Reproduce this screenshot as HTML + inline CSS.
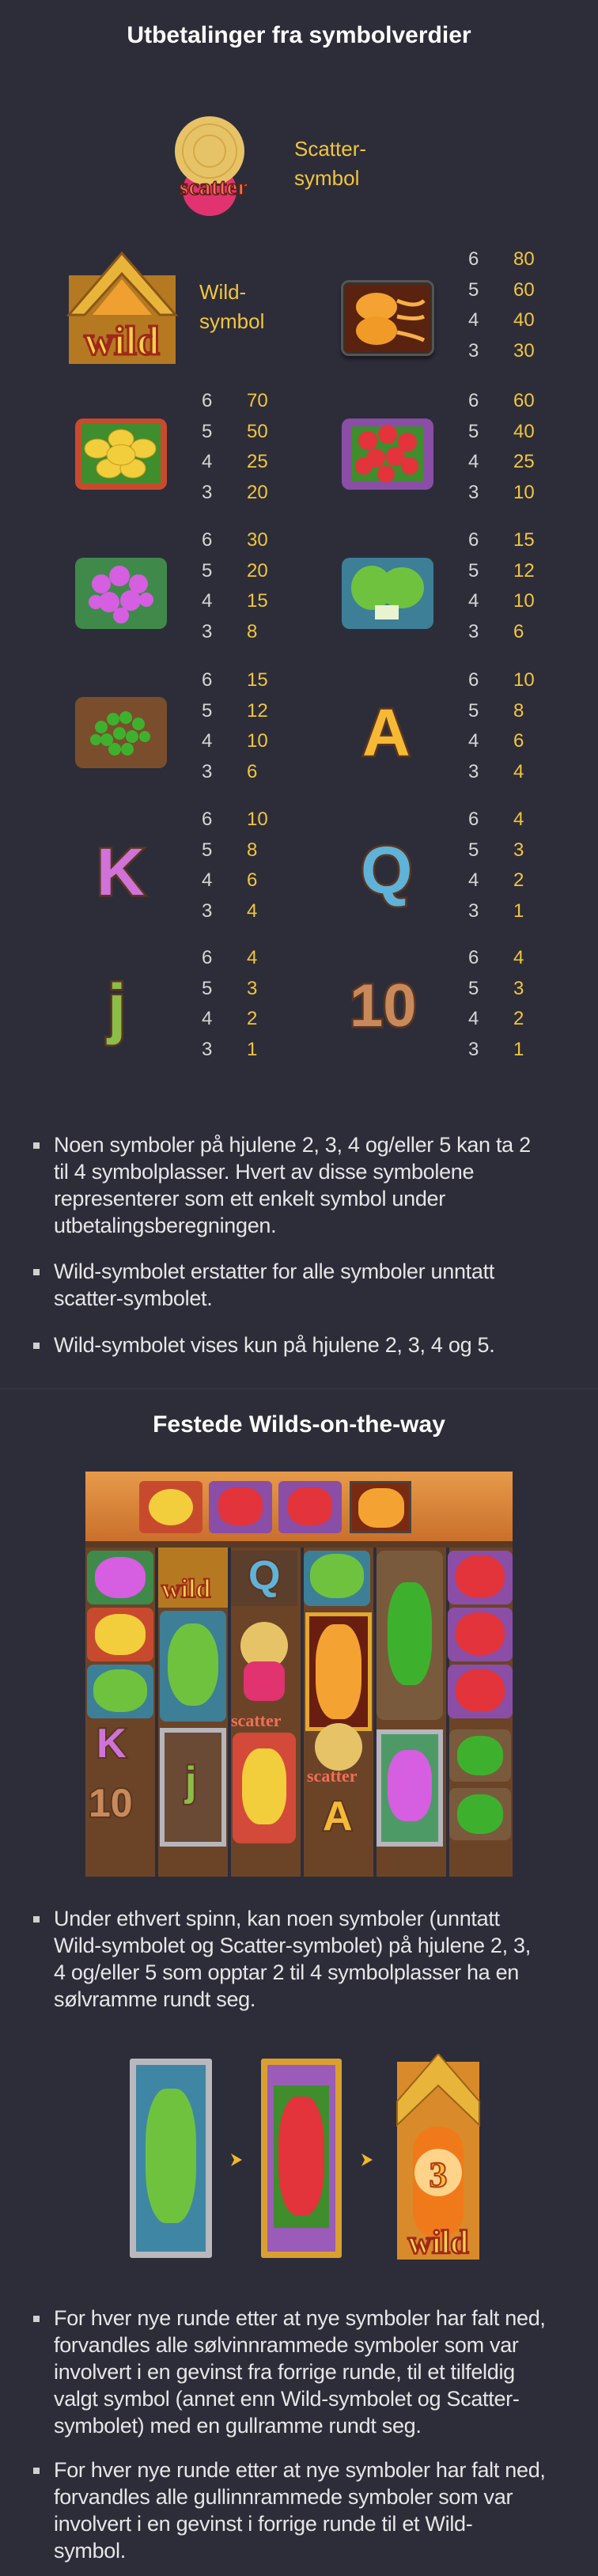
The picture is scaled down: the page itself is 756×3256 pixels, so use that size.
<!DOCTYPE html>
<html><head><meta charset="utf-8">
<style>
*{margin:0;padding:0;box-sizing:border-box}
html,body{width:756px;height:3256px;background:#2d2d3a;overflow:hidden}
body{position:relative;font-family:"Liberation Sans",sans-serif;color:#e4e4e4}
.a{position:absolute}
.title{position:absolute;left:0;width:756px;text-align:center;color:#fff;font-size:30px;font-weight:bold;letter-spacing:0}
.lbl{position:absolute;color:#f1c53d;font-size:26px;line-height:37px}
.nums{position:absolute;font-size:24px;line-height:38.5px}
.nums div{white-space:nowrap}
.nums .n{display:inline-block;width:57px;color:#d6d6d6}
.nums .v{color:#f1c53d}
.ul{position:absolute;left:68px;font-size:27px;line-height:34px;white-space:nowrap;color:#e6e6e6;letter-spacing:-0.3px}
.ul:before{content:"";position:absolute;left:-26px;top:14px;width:8px;height:8px;background:#d0d0d0}
.tray{position:absolute;border-radius:10px;box-shadow:0 4px 4px rgba(0,0,0,.45)}
.let{position:absolute;font-weight:bold;font-size:84px;line-height:1;-webkit-text-stroke:5px #5a3620;paint-order:stroke fill;font-family:"Liberation Sans",sans-serif}
</style></head><body>

<div class="title" style="top:28px">Utbetalinger fra symbolverdier</div>

<!-- scatter -->
<svg class="a" style="left:210px;top:146px" width="130" height="130" viewBox="0 0 130 130">
<ellipse cx="55" cy="95" rx="34" ry="32" fill="#e0336f"/>
<rect x="70" y="40" width="30" height="8" rx="4" fill="#d6a23a" transform="rotate(-30 85 44)"/>
<circle cx="55" cy="45" r="44" fill="#e7c368"/>
<circle cx="55" cy="45" r="34" fill="none" stroke="#d5a846" stroke-width="2"/>
<circle cx="55" cy="45" r="20" fill="none" stroke="#d5a846" stroke-width="2"/>
<text x="60" y="100" text-anchor="middle" font-family="Liberation Serif,serif" font-size="30" font-weight="bold" fill="#f36e55" stroke="#5a1f12" stroke-width="1.5">scatter</text>
</svg>
<div class="lbl" style="left:372px;top:170px">Scatter-<br>symbol</div>

<!-- row 1 -->
<svg class="a" style="left:82px;top:318px" width="145" height="145" viewBox="0 0 145 145">
<rect x="5" y="30" width="135" height="112" fill="#b57922"/>
<path d="M72 2 L140 80 L120 80 L72 28 L25 80 L5 80 Z" fill="#e9b43a" stroke="#8a5716" stroke-width="3"/>
<path d="M72 35 L110 80 L35 80Z" fill="#f0a030"/>
<text x="72" y="130" text-anchor="middle" font-family="Liberation Serif,serif" font-weight="bold" font-size="52" fill="#f7d24a" stroke="#a0281a" stroke-width="3">wild</text>
</svg>
<div class="lbl" style="left:252px;top:351px">Wild-<br>symbol</div>
<div class="tray" style="left:431px;top:354px;width:118px;height:96px;background:#3a2f2a;border:3px solid #555"></div>
<svg class="a" style="left:436px;top:360px" width="108" height="84"><rect width="108" height="84" fill="#5a2310"/><ellipse cx="40" cy="28" rx="26" ry="18" fill="#f4a232"/><ellipse cx="40" cy="58" rx="26" ry="18" fill="#f09a28"/><path d="M66 20 Q90 30 100 20 M66 40 Q90 45 100 40 M66 60 Q90 65 100 70" stroke="#f7b048" stroke-width="5" fill="none"/></svg>
<div class="nums" style="left:592px;top:309px"><div><span class="n">6</span><span class="v">80</span></div><div><span class="n">5</span><span class="v">60</span></div><div><span class="n">4</span><span class="v">40</span></div><div><span class="n">3</span><span class="v">30</span></div></div>

<!-- row 2 -->
<svg class="a" style="left:93px;top:527px" width="120" height="96"><rect x="2" y="2" width="116" height="90" rx="10" fill="#c84a2e"/><rect x="10" y="8" width="100" height="76" fill="#3f8d2c"/>
<g fill="#f2cd3c" stroke="#c99a20"><ellipse cx="30" cy="40" rx="16" ry="12"/><ellipse cx="60" cy="28" rx="16" ry="12"/><ellipse cx="88" cy="40" rx="16" ry="12"/><ellipse cx="45" cy="65" rx="16" ry="12"/><ellipse cx="75" cy="65" rx="16" ry="12"/><ellipse cx="60" cy="48" rx="18" ry="13"/></g></svg>
<div class="nums" style="left:255px;top:488px"><div><span class="n">6</span><span class="v">70</span></div><div><span class="n">5</span><span class="v">50</span></div><div><span class="n">4</span><span class="v">25</span></div><div><span class="n">3</span><span class="v">20</span></div></div>
<svg class="a" style="left:430px;top:527px" width="120" height="96"><rect x="2" y="2" width="116" height="90" rx="10" fill="#8a4ea6"/><rect x="14" y="12" width="92" height="70" fill="#3f8d2c"/>
<g fill="#e2343a"><circle cx="35" cy="30" r="12"/><circle cx="60" cy="22" r="12"/><circle cx="85" cy="32" r="12"/><circle cx="45" cy="52" r="12"/><circle cx="70" cy="50" r="12"/><circle cx="58" cy="72" r="11"/><circle cx="88" cy="62" r="11"/><circle cx="30" cy="62" r="11"/></g></svg>
<div class="nums" style="left:592px;top:488px"><div><span class="n">6</span><span class="v">60</span></div><div><span class="n">5</span><span class="v">40</span></div><div><span class="n">4</span><span class="v">25</span></div><div><span class="n">3</span><span class="v">10</span></div></div>

<!-- row 3 -->
<svg class="a" style="left:93px;top:703px" width="120" height="96"><rect x="2" y="2" width="116" height="90" rx="10" fill="#3f8a4a"/>
<g fill="#d65ee0"><circle cx="35" cy="35" r="12"/><circle cx="58" cy="25" r="13"/><circle cx="82" cy="35" r="12"/><circle cx="45" cy="58" r="13"/><circle cx="72" cy="56" r="13"/><circle cx="60" cy="75" r="10"/><circle cx="28" cy="58" r="9"/><circle cx="92" cy="55" r="9"/></g></svg>
<div class="nums" style="left:255px;top:664px"><div><span class="n">6</span><span class="v">30</span></div><div><span class="n">5</span><span class="v">20</span></div><div><span class="n">4</span><span class="v">15</span></div><div><span class="n">3</span><span class="v">8</span></div></div>
<svg class="a" style="left:430px;top:703px" width="120" height="96"><rect x="2" y="2" width="116" height="90" rx="10" fill="#3d7f97"/>
<g fill="#6fc23e"><ellipse cx="40" cy="40" rx="26" ry="28"/><ellipse cx="78" cy="40" rx="28" ry="26"/></g><rect x="44" y="62" width="30" height="18" fill="#eaf3d0"/></svg>
<div class="nums" style="left:592px;top:664px"><div><span class="n">6</span><span class="v">15</span></div><div><span class="n">5</span><span class="v">12</span></div><div><span class="n">4</span><span class="v">10</span></div><div><span class="n">3</span><span class="v">6</span></div></div>

<!-- row 4 -->
<svg class="a" style="left:93px;top:879px" width="120" height="96"><rect x="2" y="2" width="116" height="90" rx="10" fill="#7a4e2c"/>
<g fill="#3db12e"><circle cx="35" cy="40" r="8"/><circle cx="50" cy="30" r="8"/><circle cx="66" cy="28" r="8"/><circle cx="82" cy="36" r="8"/><circle cx="42" cy="56" r="8"/><circle cx="58" cy="48" r="8"/><circle cx="74" cy="52" r="8"/><circle cx="90" cy="52" r="7"/><circle cx="52" cy="68" r="8"/><circle cx="68" cy="68" r="8"/><circle cx="28" cy="56" r="7"/></g></svg>
<div class="nums" style="left:255px;top:841px"><div><span class="n">6</span><span class="v">15</span></div><div><span class="n">5</span><span class="v">12</span></div><div><span class="n">4</span><span class="v">10</span></div><div><span class="n">3</span><span class="v">6</span></div></div>
<div class="let" style="left:458px;top:884px;color:#f5b935">A</div>
<div class="nums" style="left:592px;top:841px"><div><span class="n">6</span><span class="v">10</span></div><div><span class="n">5</span><span class="v">8</span></div><div><span class="n">4</span><span class="v">6</span></div><div><span class="n">3</span><span class="v">4</span></div></div>

<!-- row 5 -->
<div class="let" style="left:122px;top:1060px;color:#cf73d8">K</div>
<div class="nums" style="left:255px;top:1017px"><div><span class="n">6</span><span class="v">10</span></div><div><span class="n">5</span><span class="v">8</span></div><div><span class="n">4</span><span class="v">6</span></div><div><span class="n">3</span><span class="v">4</span></div></div>
<div class="let" style="left:456px;top:1058px;color:#5fb2d8">Q</div>
<div class="nums" style="left:592px;top:1017px"><div><span class="n">6</span><span class="v">4</span></div><div><span class="n">5</span><span class="v">3</span></div><div><span class="n">4</span><span class="v">2</span></div><div><span class="n">3</span><span class="v">1</span></div></div>

<!-- row 6 -->
<div class="let" style="left:136px;top:1232px;color:#8bbd48">j</div>
<div class="nums" style="left:255px;top:1192px"><div><span class="n">6</span><span class="v">4</span></div><div><span class="n">5</span><span class="v">3</span></div><div><span class="n">4</span><span class="v">2</span></div><div><span class="n">3</span><span class="v">1</span></div></div>
<div class="let" style="left:442px;top:1234px;color:#c88a5c;font-size:76px">10</div>
<div class="nums" style="left:592px;top:1192px"><div><span class="n">6</span><span class="v">4</span></div><div><span class="n">5</span><span class="v">3</span></div><div><span class="n">4</span><span class="v">2</span></div><div><span class="n">3</span><span class="v">1</span></div></div>

<!-- bullets 1 -->
<div class="ul" style="top:1430px">Noen symboler på hjulene 2, 3, 4 og/eller 5 kan ta 2<br>til 4 symbolplasser. Hvert av disse symbolene<br>representerer som ett enkelt symbol under<br>utbetalingsberegningen.</div>
<div class="ul" style="top:1590px">Wild-symbolet erstatter for alle symboler unntatt<br>scatter-symbolet.</div>
<div class="ul" style="top:1683px">Wild-symbolet vises kun på hjulene 2, 3, 4 og 5.</div>

<div class="a" style="left:0;top:1755px;width:756px;height:1px;background:#3a3a48"></div>
<div class="title" style="top:1784px">Festede Wilds-on-the-way</div>

<!-- board -->
<div class="a" style="left:108px;top:1860px;width:540px;height:512px;background:#5b3a24;overflow:hidden">
 <div class="a" style="left:0;top:0;width:540px;height:88px;background:linear-gradient(#e79a4a,#c9702c)"></div>
 <div class="a" style="left:68px;top:12px;width:80px;height:66px;background:#c84a2e;border-radius:6px"><div class="a" style="left:12px;top:10px;width:56px;height:46px;border-radius:50%;background:#f2cd3c"></div></div>
 <div class="a" style="left:156px;top:12px;width:80px;height:66px;background:#8a4ea6;border-radius:6px"><div class="a" style="left:12px;top:8px;width:56px;height:48px;border-radius:40%;background:#e2343a"></div></div>
 <div class="a" style="left:244px;top:12px;width:80px;height:66px;background:#8a4ea6;border-radius:6px"><div class="a" style="left:12px;top:8px;width:56px;height:48px;border-radius:40%;background:#e2343a"></div></div>
 <div class="a" style="left:334px;top:12px;width:78px;height:66px;background:#7a2a10;border:3px solid #444"><div class="a" style="left:8px;top:6px;width:58px;height:50px;border-radius:40%;background:#f4a232"></div></div>
 <div class="a" style="left:0;top:96px;width:540px;height:416px;background:repeating-linear-gradient(90deg,#6b4428 0 88px,#2d2d3a 88px 92px)"></div>
 <div class="a" style="left:2px;top:100px;width:84px;height:68px;background:#3f8a4a;border-radius:8px"><div class="a" style="left:10px;top:8px;width:64px;height:52px;border-radius:45%;background:#d65ee0"></div></div>
 <div class="a" style="left:2px;top:172px;width:84px;height:68px;background:#c84a2e;border-radius:8px"><div class="a" style="left:10px;top:8px;width:64px;height:52px;border-radius:45%;background:#f2cd3c"></div></div>
 <div class="a" style="left:2px;top:244px;width:84px;height:68px;background:#3d7f97;border-radius:8px"><div class="a" style="left:8px;top:6px;width:68px;height:54px;border-radius:45%;background:#6fc23e"></div></div>
 <div class="let" style="left:14px;top:318px;font-size:52px;-webkit-text-stroke:4px #5a3620;color:#cf73d8">K</div>
 <div class="let" style="left:4px;top:394px;font-size:50px;-webkit-text-stroke:4px #5a3620;color:#c88a5c">10</div>
 <div class="a" style="left:92px;top:96px;width:88px;height:76px;background:#b57922"><div class="a" style="left:4px;top:34px;font-family:'Liberation Serif',serif;font-weight:bold;font-size:34px;color:#f7d24a;-webkit-text-stroke:2px #a0281a">wild</div></div>
 <div class="a" style="left:94px;top:176px;width:84px;height:140px;background:#3d7f97;border-radius:8px"><div class="a" style="left:10px;top:16px;width:64px;height:104px;border-radius:45%;background:#6fc23e"></div></div>
 <div class="a" style="left:94px;top:324px;width:84px;height:150px;border:6px solid #b6b6bc;background:#6a4a34"><div class="let" style="left:26px;top:36px;font-size:52px;-webkit-text-stroke:4px #5a3620;color:#8bbd48">j</div></div>
 <div class="a" style="left:184px;top:100px;width:84px;height:70px;background:#5c3e2c"><div class="let" style="left:22px;top:6px;font-size:52px;-webkit-text-stroke:4px #5a3620;color:#5fb2d8">Q</div></div>
 <div class="a" style="left:196px;top:190px;width:60px;height:60px;border-radius:50%;background:#e7c368"></div>
 <div class="a" style="left:200px;top:240px;width:52px;height:50px;border-radius:14px;background:#e0336f"></div>
 <div class="a" style="left:184px;top:302px;font-family:'Liberation Serif',serif;font-weight:bold;font-size:22px;color:#f36e55">scatter</div>
 <div class="a" style="left:186px;top:330px;width:80px;height:140px;background:#d44a3a;border-radius:10px"><div class="a" style="left:12px;top:20px;width:56px;height:96px;border-radius:40%;background:#f2cd3c"></div></div>
 <div class="a" style="left:276px;top:100px;width:84px;height:70px;background:#3d7f97;border-radius:8px"><div class="a" style="left:8px;top:4px;width:68px;height:56px;border-radius:45%;background:#6fc23e"></div></div>
 <div class="a" style="left:278px;top:178px;width:84px;height:150px;border:5px solid #e2a830;background:#6a1e10"><div class="a" style="left:8px;top:10px;width:58px;height:120px;border-radius:40%;background:#f4a232"></div></div>
 <div class="a" style="left:290px;top:318px;width:60px;height:60px;border-radius:50%;background:#e7c368"></div>
 <div class="a" style="left:280px;top:372px;font-family:'Liberation Serif',serif;font-weight:bold;font-size:22px;color:#f36e55">scatter</div>
 <div class="let" style="left:300px;top:410px;font-size:52px;-webkit-text-stroke:4px #5a3620;color:#f5b935">A</div>
 <div class="a" style="left:368px;top:100px;width:84px;height:214px;background:#7a5a3c;border-radius:10px"><div class="a" style="left:14px;top:40px;width:56px;height:130px;border-radius:40%;background:#3db12e"></div></div>
 <div class="a" style="left:368px;top:326px;width:84px;height:148px;border:6px solid #b6b6bc;background:#4e9a66"><div class="a" style="left:8px;top:20px;width:56px;height:90px;border-radius:40%;background:#d65ee0"></div></div>
 <div class="a" style="left:458px;top:100px;width:82px;height:68px;background:#8a4ea6;border-radius:8px"><div class="a" style="left:10px;top:6px;width:62px;height:54px;border-radius:45%;background:#e2343a"></div></div>
 <div class="a" style="left:458px;top:172px;width:82px;height:68px;background:#8a4ea6;border-radius:8px"><div class="a" style="left:10px;top:6px;width:62px;height:54px;border-radius:45%;background:#e2343a"></div></div>
 <div class="a" style="left:458px;top:244px;width:82px;height:68px;background:#8a4ea6;border-radius:8px"><div class="a" style="left:10px;top:6px;width:62px;height:54px;border-radius:45%;background:#e2343a"></div></div>
 <div class="a" style="left:460px;top:326px;width:78px;height:66px;background:#7a5a3c;border-radius:8px"><div class="a" style="left:10px;top:8px;width:58px;height:50px;border-radius:45%;background:#3db12e"></div></div>
 <div class="a" style="left:460px;top:400px;width:78px;height:66px;background:#7a5a3c;border-radius:8px"><div class="a" style="left:10px;top:8px;width:58px;height:50px;border-radius:45%;background:#3db12e"></div></div>
</div>

<div class="ul" style="top:2408px">Under ethvert spinn, kan noen symboler (unntatt<br>Wild-symbolet og Scatter-symbolet) på hjulene 2, 3,<br>4 og/eller 5 som opptar 2 til 4 symbolplasser ha en<br>sølvramme rundt seg.</div>

<!-- frames -->
<div class="a" style="left:164px;top:2602px;width:104px;height:252px;border:8px solid #b8b8be;border-radius:3px;background:#3f86a4"><div class="a" style="left:12px;top:30px;width:64px;height:170px;border-radius:40%;background:#6fc23e"></div></div>
<svg class="a" style="left:290px;top:2720px" width="18" height="20"><path d="M2 2 L16 10 L2 18 L6 10Z" fill="#f0b82a"/></svg>
<div class="a" style="left:330px;top:2602px;width:102px;height:252px;border:8px solid #d9a030;border-radius:3px;background:#9a5cb8"><div class="a" style="left:8px;top:26px;width:70px;height:180px;background:#3f8d2c"></div><div class="a" style="left:14px;top:40px;width:58px;height:150px;border-radius:40%;background:#e2343a"></div></div>
<svg class="a" style="left:455px;top:2720px" width="18" height="20"><path d="M2 2 L16 10 L2 18 L6 10Z" fill="#f0b82a"/></svg>
<svg class="a" style="left:492px;top:2596px" width="120" height="264" viewBox="0 0 120 264">
<rect x="10" y="10" width="104" height="250" fill="#d98a2a"/>
<path d="M62 0 L114 60 L114 90 L62 40 L10 90 L10 60Z" fill="#e9b43a" stroke="#9a6418" stroke-width="2"/>
<rect x="30" y="92" width="64" height="140" rx="30" fill="#f07a1a"/>
<circle cx="62" cy="150" r="30" fill="#ffd38a"/>
<text x="62" y="168" text-anchor="middle" font-family="Liberation Serif,serif" font-weight="bold" font-size="46" fill="#f7c13a" stroke="#b23a10" stroke-width="2">3</text>
<text x="62" y="252" text-anchor="middle" font-family="Liberation Serif,serif" font-weight="bold" font-size="42" fill="#f7d24a" stroke="#a0281a" stroke-width="2.5">wild</text>
</svg>

<div class="ul" style="top:2913px">For hver nye runde etter at nye symboler har falt ned,<br>forvandles alle sølvinnrammede symboler som var<br>involvert i en gevinst fra forrige runde, til et tilfeldig<br>valgt symbol (annet enn Wild-symbolet og Scatter-<br>symbolet) med en gullramme rundt seg.</div>
<div class="ul" style="top:3105px">For hver nye runde etter at nye symboler har falt ned,<br>forvandles alle gullinnrammede symboler som var<br>involvert i en gevinst i forrige runde til et Wild-<br>symbol.</div>

</body></html>
